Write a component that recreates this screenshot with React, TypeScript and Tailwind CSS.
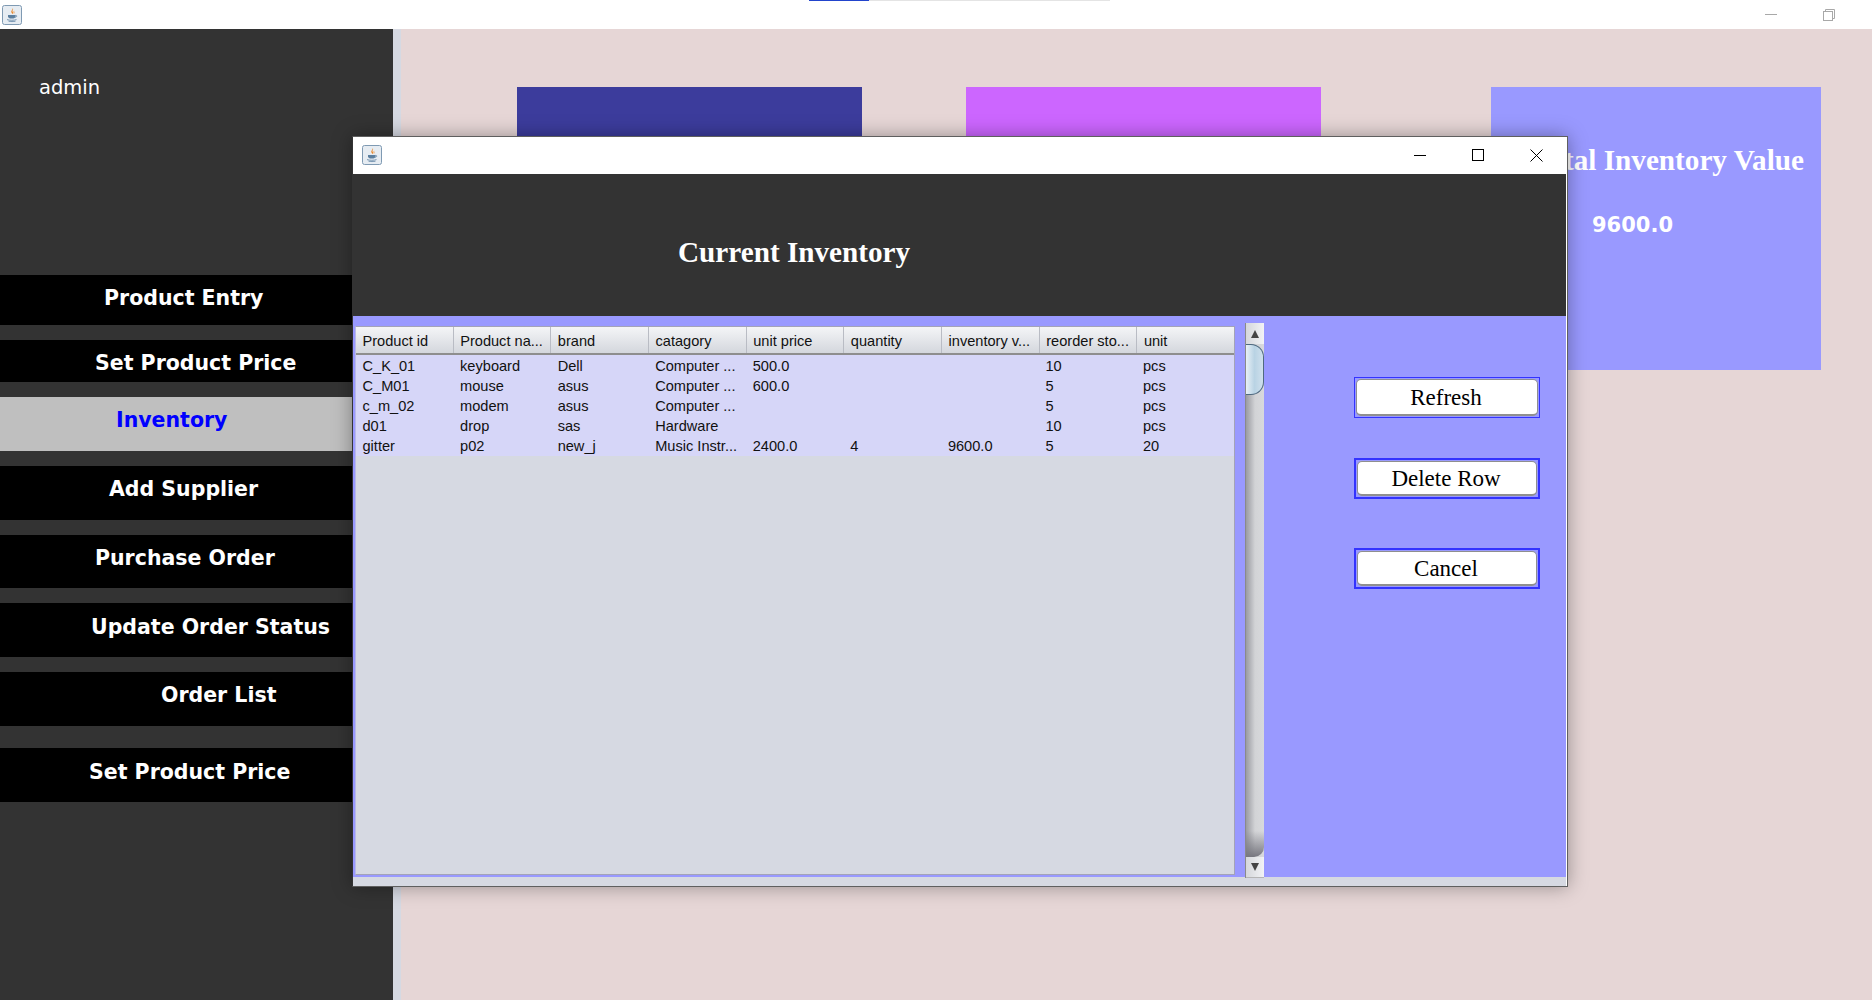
import React from "react";

function JavaIcon() {
  return (
    <svg width="20" height="20" viewBox="0 0 20 20" className="block">
      <rect x="0.5" y="0.5" width="19" height="19" rx="2" fill="#e6ecf2" stroke="#7f9ab3" />
      <path d="M10.5 3c1 1.5-1.8 2.6-1 4.4.3.7 1 1.1 1 1.6 1-1 .4-1.8 0-2.6-.5-1 1.6-1.8 0-3.4z" fill="#e8801f" />
      <path d="M12.6 5.5c-1 .6-1.6 1.2-1 2.2.3.5.2.9 0 1.3 1.2-.7 1.1-1.5.7-2.2-.3-.5-.1-.9.3-1.3z" fill="#f0a050" />
      <path d="M6 10h7.5v1.2c0 1.6-1.2 2.3-3.7 2.3S6 12.8 6 11.2z" fill="#5b7f9f" />
      <path d="M13.5 10.4c1.5-.3 2 1.4-.4 1.9" fill="none" stroke="#5b7f9f" strokeWidth="0.8" />
      <path d="M5 14.6c2.5.9 7 .9 9.5 0M6.5 16.2c2 .5 5 .5 7 0" fill="none" stroke="#6d8dab" strokeWidth="0.9" />
    </svg>
  );
}

const NAV = [
  { label: "Product Entry", h: "h-[50px]", mt: "mt-0", pl: "pl-[104px]", pt: "pt-[9px]" },
  { label: "Set Product Price", h: "h-[42px]", mt: "mt-[15px]", pl: "pl-[95px]", pt: "pt-[9px]" },
  { label: "Inventory", h: "h-[54px]", mt: "mt-[15px]", pl: "pl-[116px]", pt: "pt-[9px]", active: true },
  { label: "Add Supplier", h: "h-[54px]", mt: "mt-[15px]", pl: "pl-[109px]", pt: "pt-[9px]" },
  { label: "Purchase Order", h: "h-[53px]", mt: "mt-[15px]", pl: "pl-[95px]", pt: "pt-[9px]" },
  { label: "Update Order Status", h: "h-[54px]", mt: "mt-[15px]", pl: "pl-[91px]", pt: "pt-[10px]" },
  { label: "Order List", h: "h-[54px]", mt: "mt-[15px]", pl: "pl-[161px]", pt: "pt-[9px]" },
  { label: "Set Product Price", h: "h-[54px]", mt: "mt-[22px]", pl: "pl-[89px]", pt: "pt-[10px]" },
];

const COLS = [
  "Product id",
  "Product na...",
  "brand",
  "catagory",
  "unit price",
  "quantity",
  "inventory v...",
  "reorder sto...",
  "unit",
];

const ROWS = [
  ["C_K_01", "keyboard", "Dell", "Computer ...", "500.0", "", "", "10", "pcs"],
  ["C_M01", "mouse", "asus", "Computer ...", "600.0", "", "", "5", "pcs"],
  ["c_m_02", "modem", "asus", "Computer ...", "", "", "", "5", "pcs"],
  ["d01", "drop", "sas", "Hardware", "", "", "", "10", "pcs"],
  ["gitter", "p02", "new_j", "Music Instr...", "2400.0", "4", "9600.0", "5", "20"],
];

function DialogButton({ label, mt, thick }: { label: string; mt: string; thick?: boolean }) {
  return (
    <div className={`${mt} w-[186px] h-[41px] border-[#3333ff] ${thick ? "border-2" : "border"} p-[1px] flex`}>
      <button className="flex-1 rounded-[5px] bg-white border border-[#8f8f8f] border-b-2 pr-[2px] text-[23px] leading-none text-black font-['Liberation_Serif',serif]">
        {label}
      </button>
    </div>
  );
}

export default function App() {
  return (
    <div className="relative w-[1872px] h-[1000px] overflow-hidden bg-[#e6d6d6] flex flex-col">
      {/* main window title bar */}
      <div className="relative h-[29px] bg-white flex items-center justify-between pl-[2px] pr-[37px] shrink-0">
        <JavaIcon />
        <div className="absolute top-0 left-[809px] w-[301px] h-[1px] bg-[#e4e4e4]">
          <div className="w-[60px] h-[1px] bg-[#2244cc]" />
        </div>
        <div className="flex items-center gap-[46px]">
          <div className="w-[12px] h-[1px] bg-[#a8a8a8]" />
          <svg width="12" height="12" viewBox="0 0 12 12" className="block">
            <path d="M2.5 2.5V.5h9v9h-2" fill="none" stroke="#a8a8a8" />
            <rect x="0.5" y="2.5" width="9" height="9" fill="none" stroke="#a8a8a8" />
          </svg>
        </div>
      </div>

      <div className="flex flex-1 min-h-0">
        {/* sidebar */}
        <aside className="w-[393px] shrink-0 bg-[#333333] pt-[246px] relative">
          <div className="absolute left-[39px] top-[45px] text-white text-[19.5px] leading-[28px] font-['DejaVu_Sans',sans-serif]">
            admin
          </div>
          <nav className="flex flex-col w-[352px]">
            {NAV.map((n, i) => (
              <div
                key={i}
                className={`${n.h} ${n.mt} ${n.pl} ${n.pt} ${n.active ? "bg-[#bfbfbf] text-[#0000ff]" : "bg-black text-white"} text-[20.5px] leading-[28px] font-bold whitespace-nowrap font-['DejaVu_Sans',sans-serif]`}
              >
                {n.label}
              </div>
            ))}
          </nav>
        </aside>
        <div className="w-[8px] shrink-0 bg-[#d6d9e2]" />

        {/* content with cards */}
        <main className="flex-1 pt-[58px] pl-[116px] flex items-start">
          <div className="w-[345px] h-[283px] bg-[#3c3c9c]" />
          <div className="ml-[104px] w-[355px] h-[283px] bg-[#cc66ff]" />
          <div className="ml-[170px] w-[330px] h-[283px] bg-[#9999ff] overflow-hidden relative">
            <div className="absolute right-[17px] top-[55px] whitespace-nowrap text-white text-[29.2px] leading-[36px] font-bold font-['Liberation_Serif',serif]">
              Total Inventory Value
            </div>
            <div className="absolute left-[101px] top-[123px] text-white text-[21px] leading-[30px] font-bold font-['DejaVu_Sans',sans-serif]">
              9600.0
            </div>
          </div>
        </main>
      </div>

      {/* dialog window */}
      <div className="absolute left-[352px] top-[136px] w-[1216px] h-[751px] bg-[#d6d9e2] border border-[#5f5f5f] border-l-[#333333] shadow-[0_0_18px_rgba(0,0,0,0.35)]">
        <div className="h-full flex flex-col border-r border-white">
          <div className="h-[37px] bg-white shrink-0 flex items-center justify-between pl-[9px] pr-[23px]">
            <div className="-mt-[1px]"><JavaIcon /></div>
            <div className="flex items-center gap-[46px] -mt-[1px]">
              <div className="w-[12px] h-[1px] bg-black" />
              <div className="w-[12px] h-[12px] border border-black" />
              <svg width="13" height="13" viewBox="0 0 13 13" className="block">
                <path d="M0.5 0.5L12.5 12.5M12.5 0.5L0.5 12.5" stroke="black" strokeWidth="1" />
              </svg>
            </div>
          </div>
          <div className="h-[142px] bg-[#333333] shrink-0 pl-[325px] pt-[60px]">
            <div className="text-white text-[29.2px] leading-[36px] font-bold font-['Liberation_Serif',serif] whitespace-nowrap">
              Current Inventory
            </div>
          </div>
          <div className="h-[561px] bg-[#9999ff] shrink-0 flex items-start pl-[2px]">
            <div className="mt-[10px] w-[880px] h-[549px] bg-[#d6d9e2] border border-[#a3a3b8] border-l-[#b9b9e8] flex flex-col">
              <div className="h-[28px] shrink-0 flex border-b-2 border-[#8e8e8e] bg-gradient-to-b from-[#f4f5f7] to-[#d4d7dd]">
                {COLS.map((c) => (
                  <div
                    key={c}
                    className="flex-1 basis-0 pl-[6.5px] text-[14.6px] leading-[28px] text-[#111] border-r border-[#b9bcc4] last:border-r-0 font-['Liberation_Sans',sans-serif] whitespace-nowrap"
                  >
                    {c}
                  </div>
                ))}
              </div>
              <div className="bg-[#d6d6f8] pt-[1px]">
                {ROWS.map((r, ri) => (
                  <div key={ri} className="flex h-[20px]">
                    {r.map((c, i) => (
                      <div
                        key={i}
                        className="flex-1 basis-0 pl-[6.5px] text-[14.6px] leading-[20px] text-[#111] font-['Liberation_Sans',sans-serif] whitespace-nowrap"
                      >
                        {c}
                      </div>
                    ))}
                  </div>
                ))}
              </div>
            </div>

            {/* scrollbar */}
            <div className="ml-[10px] mt-[7px] w-[19px] h-[555px] flex flex-col border-l border-[#8a8a8a] bg-gradient-to-r from-[#9a9ba1] via-[#d2d3d6] to-[#d8d9dc]">
              <div className="h-[21px] shrink-0 bg-gradient-to-r from-[#d5d7db] to-[#f2f3f5] flex items-center justify-center">
                <svg width="10" height="10" viewBox="0 0 10 10"><path d="M5 1L9 9H1z" fill="#444" /></svg>
              </div>
              <div className="h-[51px] shrink-0 rounded-r-[13px] border border-l-0 border-[#4f6a80] bg-gradient-to-r from-[#e8f0f6] via-[#b9d3e4] to-[#cfe0ec]" />
              <div className="flex-1" />
              <div className="h-[26px] shrink-0 rounded-br-[10px] bg-gradient-to-b from-transparent to-[#77777f]" />
              <div className="h-[21px] shrink-0 bg-gradient-to-r from-[#d5d7db] to-[#f2f3f5] border-b border-[#b5b5b5] flex items-center justify-center">
                <svg width="10" height="10" viewBox="0 0 10 10"><path d="M1 1H9L5 9z" fill="#444" /></svg>
              </div>
            </div>

            {/* action buttons */}
            <div className="ml-[90px] mt-[61px] flex flex-col">
              <DialogButton label="Refresh" mt="mt-0" />
              <DialogButton label="Delete Row" mt="mt-[40px]" thick />
              <DialogButton label="Cancel" mt="mt-[49px]" thick />
            </div>
          </div>
        </div>
      </div>
    </div>
  );
}
